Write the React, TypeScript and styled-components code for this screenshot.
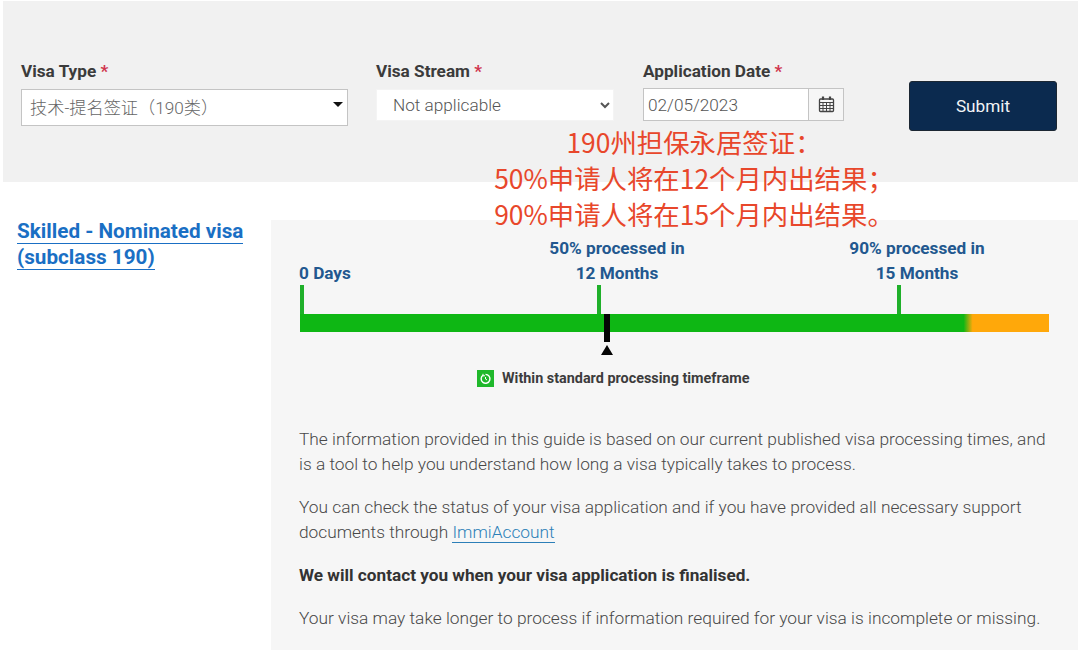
import React from "react";
import styled, { createGlobalStyle } from "styled-components";

const GlobalStyle = createGlobalStyle`
  html, body {
    margin: 0;
    padding: 0;
    background: #fff;
    font-family: Roboto, "Noto Sans CJK SC", sans-serif;
    color: #3a3a3a;
  }
  * {
    box-sizing: border-box;
  }
`;

const Page = styled.div`
  position: relative;
  width: 1080px;
  height: 651px;
  padding: 1px 2px 0 3px;
  overflow: hidden;
`;

const FormPanel = styled.form`
  display: flex;
  align-items: flex-start;
  height: 181px;
  padding: 61px 0 0 18px;
  background: #f1f1f1;
`;

const Field = styled.div<{ $width: number; $gap: number }>`
  width: ${(p) => p.$width}px;
  margin-right: ${(p) => p.$gap}px;
`;

const Label = styled.label`
  display: block;
  height: 27px;
  font-size: 17.2px;
  font-weight: 700;
  line-height: 19px;
  white-space: nowrap;
  color: #3b3b3b;
`;

const Star = styled.span`
  color: #d0354e;
`;

const TypeSelect = styled.div`
  position: relative;
  height: 37px;
  padding: 0 8px;
  background: #fff;
  border: 1px solid #c4c4c4;
  font-size: 17.2px;
  font-weight: 300;
  line-height: 36px;
  color: #666;
`;

const Caret = styled.span`
  position: absolute;
  top: 12px;
  right: 4px;
  width: 0;
  height: 0;
  border-left: 5px solid transparent;
  border-right: 5px solid transparent;
  border-top: 5px solid #111;
`;

const StreamSelect = styled.select`
  display: block;
  width: 100%;
  height: 32px;
  padding: 0 8px 0 12px;
  background: #fff;
  border: 1px solid #f4f4f4;
  border-radius: 0;
  outline: none;
  font-family: Roboto, sans-serif;
  font-size: 17.2px;
  font-weight: 300;
  color: #555;
`;

const DateGroup = styled.div`
  display: flex;
  height: 33px;
  margin-top: -1px;
  background: #fff;
  border: 1px solid #c4c4c4;
`;

const DateInput = styled.input`
  width: 165px;
  height: 100%;
  padding: 0 4px;
  background: #fff;
  border: 0;
  border-right: 1px solid #c4c4c4;
  outline: none;
  font-family: Roboto, sans-serif;
  font-size: 17.2px;
  font-weight: 300;
  color: #555;
`;

const CalendarAddon = styled.span`
  flex: 1;
  display: flex;
  align-items: center;
  justify-content: center;
  background: #f6f6f6;
  color: #444;
`;

const SubmitButton = styled.button`
  width: 148px;
  height: 50px;
  margin-top: 19px;
  background: #0b2a4f;
  border: 1px solid #1c2733;
  border-radius: 3px;
  font-family: Roboto, sans-serif;
  font-size: 17.2px;
  font-weight: 400;
  color: #f2f4f6;
`;

const Annotation = styled.div`
  position: absolute;
  top: 124px;
  left: 454px;
  width: 480px;
  font-family: "Noto Sans CJK SC", sans-serif;
  font-size: 26.4px;
  line-height: 36px;
  text-align: center;
  color: #e8472b;
`;

const Content = styled.div`
  display: flex;
  align-items: flex-start;
  padding-top: 38px;
`;

const Sidebar = styled.div`
  width: 268px;
  margin-top: -2px;
  padding: 0 10px 0 14px;
  font-size: 20.7px;
  font-weight: 700;
  line-height: 26px;
`;

const VisaLink = styled.a`
  color: #1a6fc4;
  text-decoration: none;
  border-bottom: 1px solid #1a6fc4;
`;

const ResultPanel = styled.section`
  width: 807px;
  height: 430px;
  padding: 15px 28px 0;
  background: #f6f6f6;
`;

const Milestones = styled.div`
  display: grid;
  grid-template-columns: 297px 300px 1fr;
  height: 79px;
`;

const Milestone = styled.div`
  display: flex;
  flex-direction: column;
  justify-content: flex-end;
`;

const MilestoneText = styled.div<{ $center?: boolean }>`
  width: ${(p) => (p.$center ? "140px" : "auto")};
  margin-left: ${(p) => (p.$center ? "-49px" : "0")};
  margin-bottom: -1px;
  font-size: 17.2px;
  font-weight: 700;
  line-height: 25px;
  white-space: nowrap;
  text-align: ${(p) => (p.$center ? "center" : "left")};
  color: #22588f;
`;

const Tick = styled.span`
  display: block;
  width: 4px;
  height: 29px;
  margin-left: 1px;
  background: #1fb02a;
`;

const Bar = styled.div`
  position: relative;
  width: 749px;
  height: 18px;
  margin-left: 1px;
  background: linear-gradient(
    to right,
    #0eb714 0,
    #0eb714 88.6%,
    #ffa80a 89.8%,
    #ffa80a 100%
  );
`;

const Marker = styled.span`
  position: absolute;
  top: 0;
  left: 304px;
  width: 6px;
  height: 28px;
  background: #050505;
`;

const MarkerArrow = styled.span`
  position: absolute;
  top: 31px;
  left: 301px;
  width: 0;
  height: 0;
  border-left: 6px solid transparent;
  border-right: 6px solid transparent;
  border-bottom: 10px solid #050505;
`;

const Legend = styled.div`
  display: flex;
  align-items: center;
  gap: 8px;
  margin: 38px 0 0 178px;
  font-size: 14.4px;
  font-weight: 700;
  line-height: 17px;
  color: #3c3c3c;
`;

const LegendIcon = styled.span`
  display: flex;
  align-items: center;
  justify-content: center;
  width: 17px;
  height: 17px;
  background: #1fb82b;
`;

const Copy = styled.div`
  margin-top: 40px;
  line-height: 25px;
`;

const Paragraph = styled.p<{ $bold?: boolean }>`
  margin: 0 0 18px;
  font-size: ${(p) => (p.$bold ? "17.2px" : "17.32px")};
  font-weight: ${(p) => (p.$bold ? 700 : 300)};
  color: ${(p) => (p.$bold ? "#333" : "#484848")};
`;

const TextLink = styled.a`
  color: #2c7fb8;
  text-decoration: none;
  border-bottom: 1px solid #2c7fb8;
`;

const CalendarIcon = () => (
  <svg width="17" height="17" viewBox="0 0 17 17" fill="none" stroke="currentColor">
    <rect x="1.5" y="3" width="14" height="12.5" rx="1" strokeWidth="1.3" />
    <path d="M1.5 6.5h14M1.5 9.5h14M1.5 12.5h14M5 6.5v9M8.5 6.5v9M12 6.5v9" strokeWidth="1" />
    <path d="M5 0.5v3.5M12 0.5v3.5" strokeWidth="2.2" />
  </svg>
);

const TimerIcon = () => (
  <svg width="13" height="13" viewBox="0 0 13 13" fill="none" stroke="#fff" strokeWidth="1.4">
    <path d="M4 3.2a4.4 4.4 0 1 0 2.5-.8" />
    <path d="M4 1.8v2h2M6.5 5v2l1.5 1" strokeWidth="1" />
  </svg>
);

const App = () => {
  return (
    <Page>
      <GlobalStyle />
      <FormPanel>
        <Field $width={327} $gap={28}>
          <Label>
            Visa Type <Star>*</Star>
          </Label>
          <TypeSelect>
            技术-提名签证（190类）
            <Caret />
          </TypeSelect>
        </Field>
        <Field $width={238} $gap={29}>
          <Label>
            Visa Stream <Star>*</Star>
          </Label>
          <StreamSelect defaultValue="na">
            <option value="na">Not applicable</option>
          </StreamSelect>
        </Field>
        <Field $width={201} $gap={65}>
          <Label>
            Application Date <Star>*</Star>
          </Label>
          <DateGroup>
            <DateInput readOnly value="02/05/2023" />
            <CalendarAddon>
              <CalendarIcon />
            </CalendarAddon>
          </DateGroup>
        </Field>
        <SubmitButton type="button">Submit</SubmitButton>
      </FormPanel>

      <Annotation>
        190州担保永居签证：
        <br />
        50%申请人将在12个月内出结果；
        <br />
        90%申请人将在15个月内出结果。
      </Annotation>

      <Content>
        <Sidebar>
          <VisaLink href="#">Skilled - Nominated visa</VisaLink>
          <br />
          <VisaLink href="#">(subclass 190)</VisaLink>
        </Sidebar>
        <ResultPanel>
          <Milestones>
            <Milestone>
              <MilestoneText>0 Days</MilestoneText>
              <Tick />
            </Milestone>
            <Milestone>
              <MilestoneText $center>
                50% processed in
                <br />
                12 Months
              </MilestoneText>
              <Tick />
            </Milestone>
            <Milestone>
              <MilestoneText $center>
                90% processed in
                <br />
                15 Months
              </MilestoneText>
              <Tick />
            </Milestone>
          </Milestones>
          <Bar>
            <Marker />
            <MarkerArrow />
          </Bar>
          <Legend>
            <LegendIcon>
              <TimerIcon />
            </LegendIcon>
            Within standard processing timeframe
          </Legend>
          <Copy>
            <Paragraph>
              The information provided in this guide is based on our current published visa processing times, and
              <br />
              is a tool to help you understand how long a visa typically takes to process.
            </Paragraph>
            <Paragraph>
              You can check the status of your visa application and if you have provided all necessary support
              <br />
              documents through <TextLink href="#">ImmiAccount</TextLink>
            </Paragraph>
            <Paragraph $bold>We will contact you when your visa application is finalised.</Paragraph>
            <Paragraph>
              Your visa may take longer to process if information required for your visa is incomplete or missing.
            </Paragraph>
          </Copy>
        </ResultPanel>
      </Content>
    </Page>
  );
};

export default App;
